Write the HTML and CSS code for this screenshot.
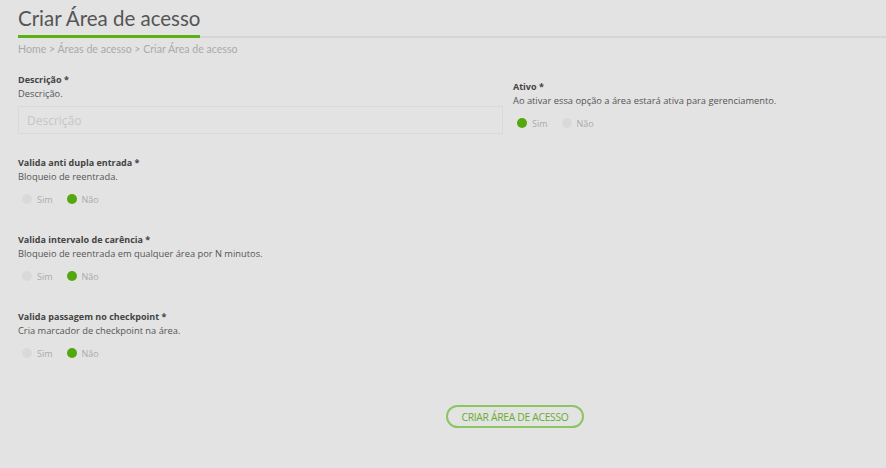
FILE: index.html
```html
<!DOCTYPE html>
<html lang="pt-BR">
<head>
    <meta charset="UTF-8">
    <meta name="viewport" content="width=device-width, initial-scale=1.0">
    <link rel="stylesheet" href="styles.css">
    <title>Criar Área de acesso</title>
</head>
<body>
    <div class="page-header">
        <h1 class="page-title">Criar Área de acesso</h1>
    </div>
    <div class="breadcrumb">Home &gt; Áreas de acesso &gt; Criar Área de acesso</div>

    <form class="access-form">
        <div class="form-row">
            <div class="field">
                <div class="field-label">Descrição *</div>
                <div class="field-help">Descrição.</div>
                <input type="text" class="text-input" placeholder="Descrição">
            </div>
            <div class="field field-right">
                <div class="field-label">Ativo *</div>
                <div class="field-help">Ao ativar essa opção a área estará ativa para gerenciamento.</div>
                <div class="radio-group">
                    <span class="radio"><span class="dot on"></span>Sim</span>
                    <span class="radio"><span class="dot"></span>Não</span>
                </div>
            </div>
        </div>

        <div class="field">
            <div class="field-label">Valida anti dupla entrada *</div>
            <div class="field-help">Bloqueio de reentrada.</div>
            <div class="radio-group">
                <span class="radio"><span class="dot"></span>Sim</span>
                <span class="radio"><span class="dot on"></span>Não</span>
            </div>
        </div>

        <div class="field">
            <div class="field-label">Valida intervalo de carência *</div>
            <div class="field-help">Bloqueio de reentrada em qualquer área por N minutos.</div>
            <div class="radio-group">
                <span class="radio"><span class="dot"></span>Sim</span>
                <span class="radio"><span class="dot on"></span>Não</span>
            </div>
        </div>

        <div class="field">
            <div class="field-label">Valida passagem no checkpoint *</div>
            <div class="field-help">Cria marcador de checkpoint na área.</div>
            <div class="radio-group">
                <span class="radio"><span class="dot"></span>Sim</span>
                <span class="radio"><span class="dot on"></span>Não</span>
            </div>
        </div>

        <div class="actions">
            <button type="button" class="submit-button">CRIAR ÁREA DE ACESSO</button>
        </div>
    </form>
</body>
</html>
```

FILE: styles.css
```css
body {
    font-family: "Open Sans", Arial, sans-serif;
    margin: 0;
    padding: 0;
    background-color: #e3e3e3;
    color: #555;
}

.page-header {
    margin-left: 18px;
    padding-top: 5px;
    border-bottom: 2px solid #d6d6d6;
}

.page-title {
    display: inline-block;
    margin: 0 0 -2px 0;
    padding-bottom: 4px;
    font-family: Lato, "Open Sans", sans-serif;
    font-size: 20.5px;
    font-weight: 400;
    line-height: 26px;
    color: #555;
    border-bottom: 3px solid #5bb014;
}

.breadcrumb {
    margin: 4px 0 0 18px;
    font-family: Lato, sans-serif;
    font-size: 10.6px;
    line-height: 14px;
    color: #aaa;
}

.access-form {
    padding: 17px 18px 0 18px;
}

.form-row {
    display: grid;
    grid-template-columns: 485px 1fr;
    gap: 10px;
    margin-bottom: 22px;
}

.field {
    margin-bottom: 27px;
}

.form-row .field {
    margin-bottom: 0;
}

.field-right {
    padding-top: 7px;
}

.field-label {
    font-size: 9px;
    font-weight: 700;
    line-height: 14px;
    color: #444;
}

.field-help {
    font-size: 9.3px;
    line-height: 13px;
    color: #555;
}

.text-input {
    display: block;
    box-sizing: border-box;
    width: 100%;
    height: 28px;
    margin-top: 6px;
    padding: 0 8px;
    border: 1px solid #d9d9d9;
    background-color: #e3e3e3;
    font-family: "Open Sans", sans-serif;
    font-size: 12px;
    outline: none;
}

.text-input::placeholder {
    color: #c6c6c6;
}

.radio-group {
    display: flex;
    gap: 14px;
    margin: 9px 0 0 4px;
    height: 14px;
    align-items: center;
}

.radio {
    display: flex;
    align-items: center;
    gap: 5px;
    font-size: 9px;
    color: #ababab;
}

.dot {
    width: 10px;
    height: 10px;
    border-radius: 50%;
    background-color: #d9d9d9;
}

.dot.on {
    background-color: #52a80c;
}

.actions {
    display: flex;
    justify-content: center;
    padding-left: 144px;
    margin-top: 45px;
}

.submit-button {
    width: 138px;
    height: 23px;
    padding: 0;
    border: 2px solid #8cc561;
    border-radius: 12px;
    background-color: #e3e3e3;
    color: #68ad2e;
    font-family: "Open Sans", sans-serif;
    font-size: 10.3px;
    letter-spacing: -0.3px;
    cursor: pointer;
}
```
